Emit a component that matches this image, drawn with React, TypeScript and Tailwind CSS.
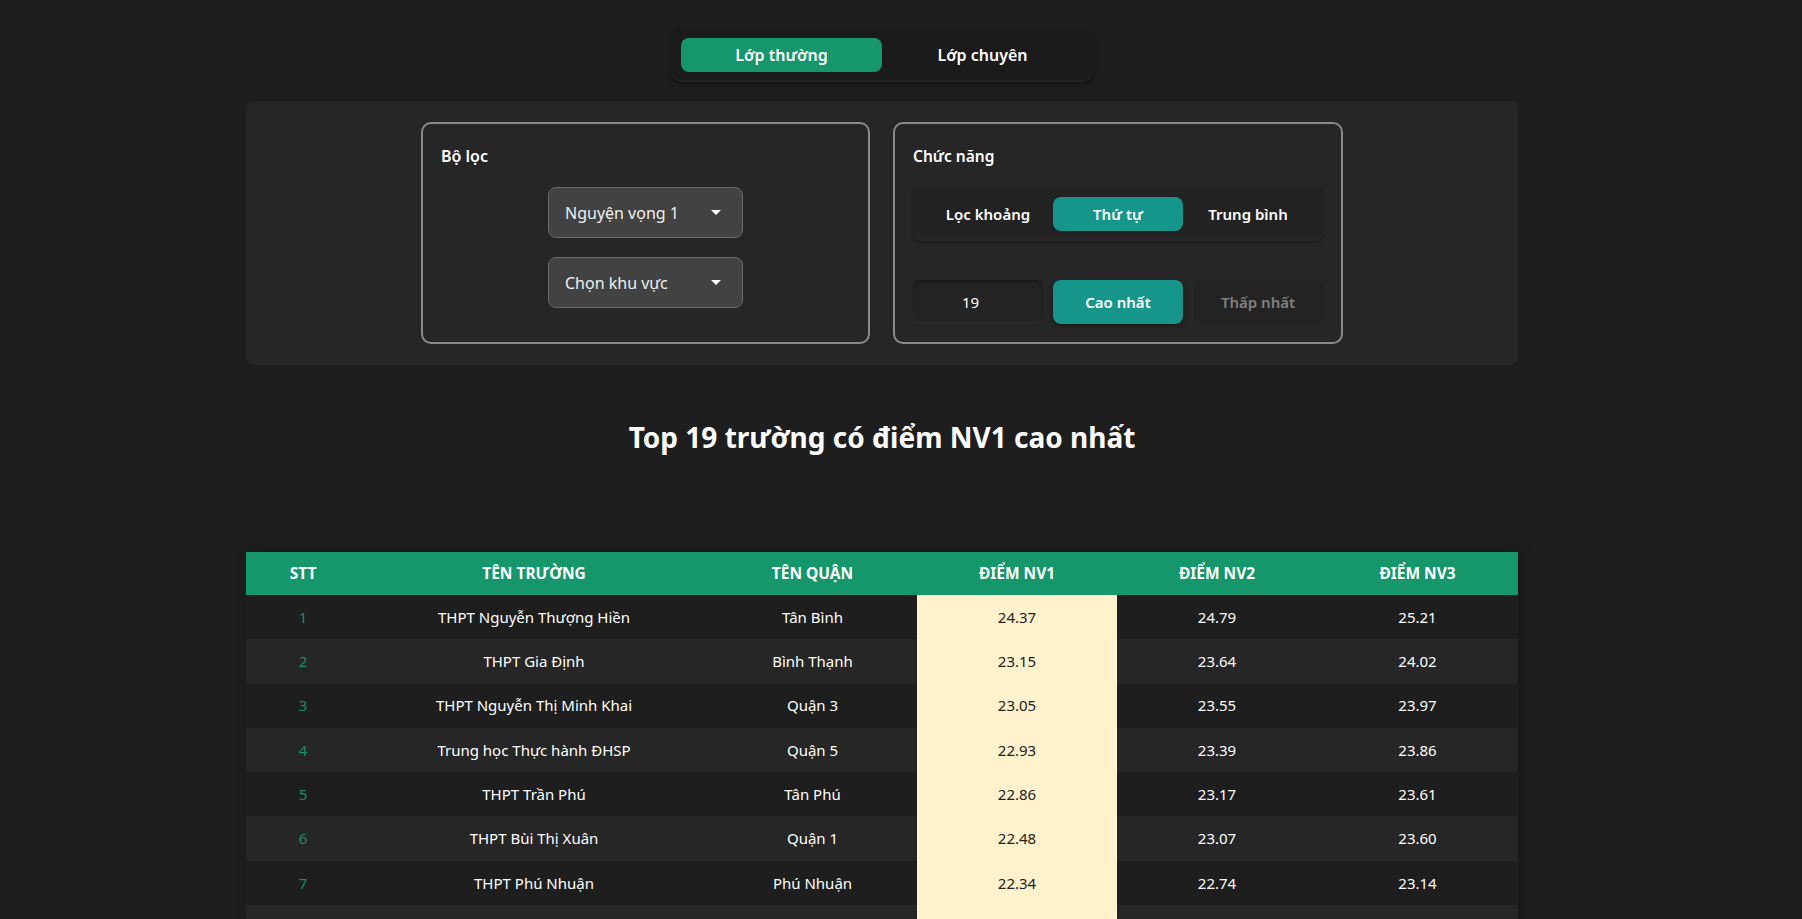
import { useState } from "react";

type Row = {
  stt: number;
  truong: string;
  quan: string;
  nv1: string;
  nv2: string;
  nv3: string;
};

const rows: Row[] = [
  { stt: 1, truong: "THPT Nguyễn Thượng Hiền", quan: "Tân Bình", nv1: "24.37", nv2: "24.79", nv3: "25.21" },
  { stt: 2, truong: "THPT Gia Định", quan: "Bình Thạnh", nv1: "23.15", nv2: "23.64", nv3: "24.02" },
  { stt: 3, truong: "THPT Nguyễn Thị Minh Khai", quan: "Quận 3", nv1: "23.05", nv2: "23.55", nv3: "23.97" },
  { stt: 4, truong: "Trung học Thực hành ĐHSP", quan: "Quận 5", nv1: "22.93", nv2: "23.39", nv3: "23.86" },
  { stt: 5, truong: "THPT Trần Phú", quan: "Tân Phú", nv1: "22.86", nv2: "23.17", nv3: "23.61" },
  { stt: 6, truong: "THPT Bùi Thị Xuân", quan: "Quận 1", nv1: "22.48", nv2: "23.07", nv3: "23.60" },
  { stt: 7, truong: "THPT Phú Nhuận", quan: "Phú Nhuận", nv1: "22.34", nv2: "22.74", nv3: "23.14" },
];

function Select({ label }: { label: string }) {
  return (
    <button
      type="button"
      className="flex h-[51px] w-[195px] items-center justify-between rounded-lg border border-[#6a6a6a] bg-[#424242] pl-4 pr-[21px] text-[16px] text-[#f0f0f0]"
    >
      <span>{label}</span>
      <span className="h-0 w-0 border-x-[5px] border-t-[5px] border-x-transparent border-t-white" />
    </button>
  );
}

export default function App() {
  const [lop, setLop] = useState("thuong");

  return (
    <div className="h-screen overflow-hidden bg-[#1e1e1e] font-['Noto_Sans',sans-serif] text-white">
      <div className="w-[1764px] pt-[28px]">
        <div className="flex justify-center">
          <div className="flex rounded-[10px] bg-[#1b1b1b] p-[10px] shadow-[0_2px_4px_rgba(0,0,0,0.45),inset_0_-2px_2px_rgba(255,255,255,0.05)]">
            <button
              type="button"
              onClick={() => setLop("thuong")}
              className={`h-[34px] w-[201px] rounded-lg text-[16px] font-semibold ${lop === "thuong" ? "bg-[#15966b]" : ""}`}
            >
              Lớp thường
            </button>
            <button
              type="button"
              onClick={() => setLop("chuyen")}
              className={`h-[34px] w-[201px] rounded-lg text-[16px] font-semibold ${lop === "chuyen" ? "bg-[#15966b]" : ""}`}
            >
              Lớp chuyên
            </button>
          </div>
        </div>

        <div className="mx-auto mt-[19px] flex w-[1272px] justify-center gap-[23px] rounded-lg bg-[#262626] py-[21px]">
          <div className="flex h-[222px] w-[449px] flex-col rounded-[10px] border-2 border-[#8a8a8a] px-[18px] pt-[20px]">
            <p className="text-[16px] font-semibold leading-6">Bộ lọc</p>
            <div className="mt-[19px] flex flex-col items-center gap-[19px]">
              <Select label="Nguyện vọng 1" />
              <Select label="Chọn khu vực" />
            </div>
          </div>

          <div className="flex h-[222px] w-[450px] flex-col rounded-[10px] border-2 border-[#8a8a8a] px-[18px] pt-[20px]">
            <p className="text-[15.5px] font-semibold leading-6">Chức năng</p>
            <div className="mt-[19px] flex rounded-lg bg-[#222222] p-[10px] shadow-[inset_0_-2px_3px_rgba(255,255,255,0.04),0_1px_3px_rgba(0,0,0,0.35)]">
              <button type="button" className="h-[34px] w-[130px] rounded-lg text-[15px] font-semibold">
                Lọc khoảng
              </button>
              <button type="button" className="h-[34px] w-[130px] rounded-lg bg-[#16968a] text-[15px] font-semibold">
                Thứ tự
              </button>
              <button type="button" className="h-[34px] w-[130px] rounded-lg text-[15px] font-semibold">
                Trung bình
              </button>
            </div>
            <div className="mt-[39px] flex gap-[10px]">
              <div className="flex h-[44px] w-[130px] items-center rounded-lg bg-[#232323] pl-[49px] text-[15px] shadow-[inset_0_-2px_2px_rgba(255,255,255,0.05),inset_0_2px_3px_rgba(0,0,0,0.3)]">
                19
              </div>
              <button type="button" className="h-[44px] w-[130px] rounded-lg bg-[#16968a] text-[15px] font-semibold shadow-[0_2px_4px_rgba(0,0,0,0.35)]">
                Cao nhất
              </button>
              <button type="button" className="h-[44px] w-[130px] rounded-lg bg-[#232323] text-[15px] font-semibold text-[#808080]">
                Thấp nhất
              </button>
            </div>
          </div>
        </div>

        <h1 className="mt-[52px] text-center text-[28px] font-bold leading-10">
          Top 19 trường có điểm NV1 cao nhất
        </h1>

        <table className="mx-auto mt-[95px] w-[1272px] table-fixed border-collapse text-[15px] shadow-[4px_0_12px_rgba(0,0,0,0.25)]">
          <colgroup>
            <col className="w-[114px]" />
            <col className="w-[348px]" />
            <col className="w-[209px]" />
            <col className="w-[200px]" />
            <col className="w-[200px]" />
            <col className="w-[201px]" />
          </colgroup>
          <thead>
            <tr className="h-[43px] bg-[#15966b] text-[15.5px] font-bold uppercase">
              <th>STT</th>
              <th>Tên trường</th>
              <th>Tên quận</th>
              <th>Điểm NV1</th>
              <th>Điểm NV2</th>
              <th>Điểm NV3</th>
            </tr>
          </thead>
          <tbody>
            {rows.map((r) => (
              <tr key={r.stt} className={`h-[44.3px] text-center ${r.stt % 2 === 0 ? "bg-[#262626]" : "bg-[#1e1e1e]"}`}>
                <td className="text-[#1a8f5f]">{r.stt}</td>
                <td>{r.truong}</td>
                <td>{r.quan}</td>
                <td className="bg-[#fff2cc] text-[#222222]">{r.nv1}</td>
                <td>{r.nv2}</td>
                <td>{r.nv3}</td>
              </tr>
            ))}
            <tr className="h-[44.3px] bg-[#262626]">
              <td />
              <td />
              <td />
              <td className="bg-[#fff2cc]" />
              <td />
              <td />
            </tr>
          </tbody>
        </table>
      </div>
    </div>
  );
}
